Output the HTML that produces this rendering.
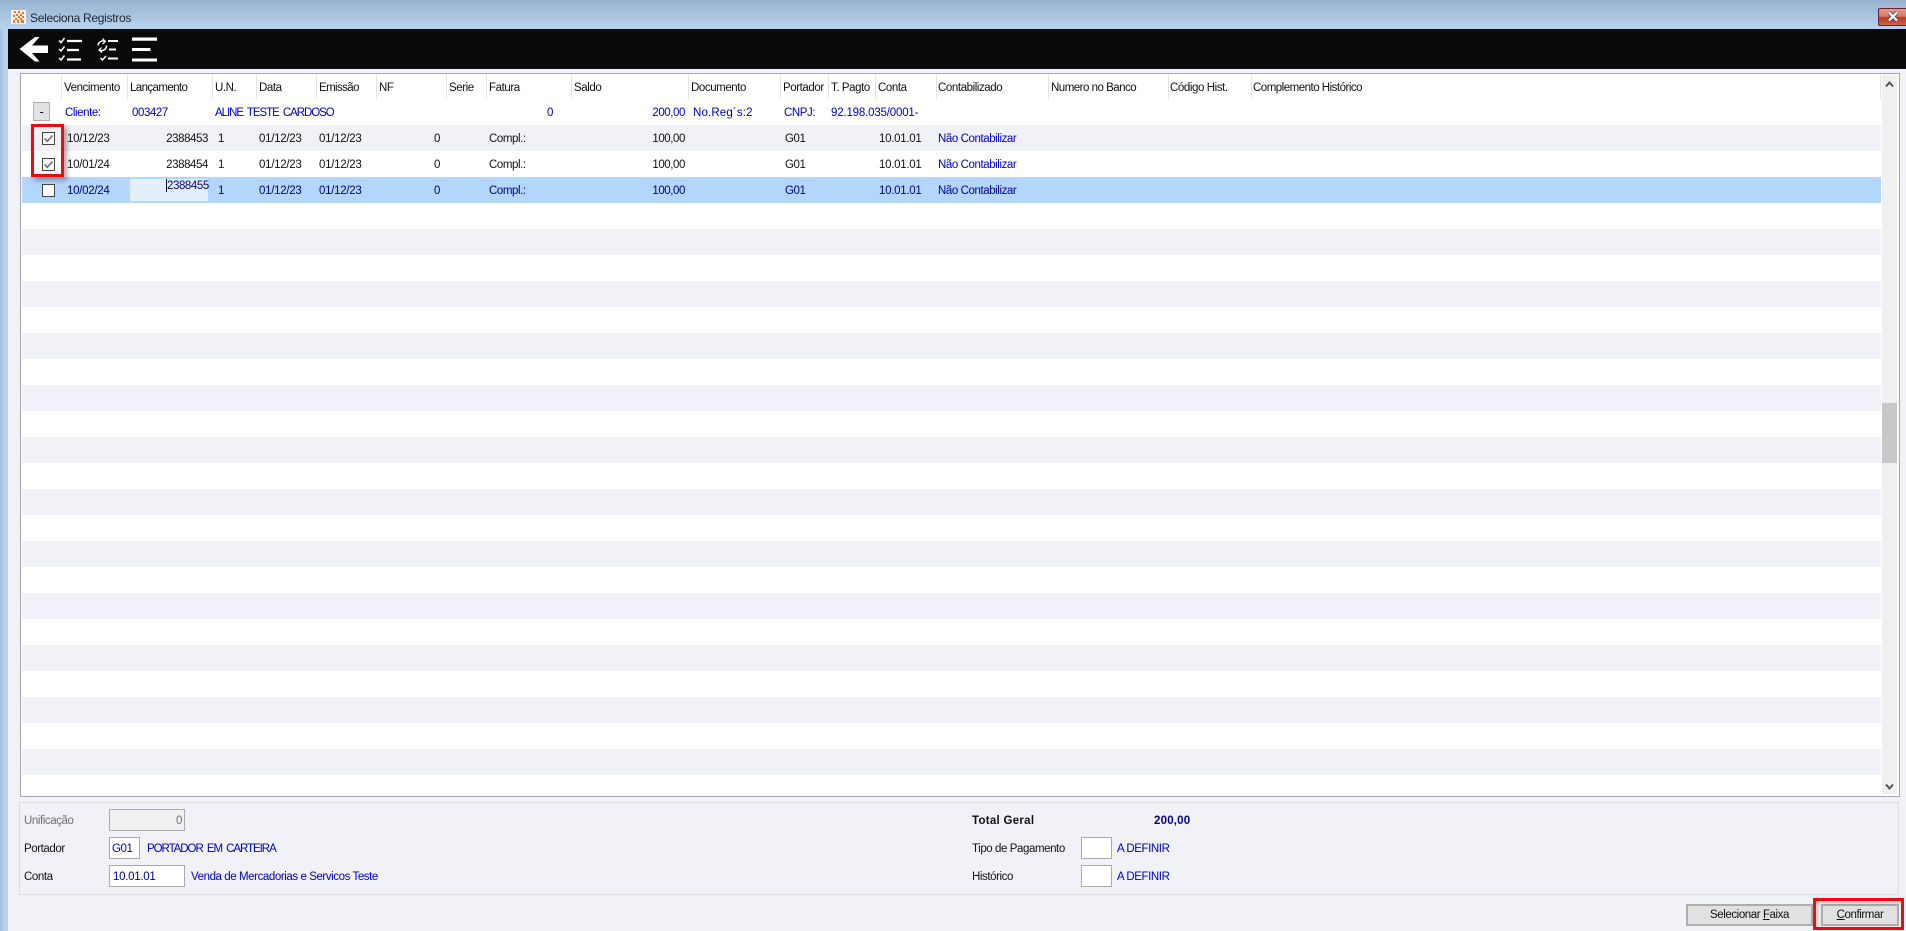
<!DOCTYPE html>
<html lang="pt"><head><meta charset="utf-8"><title>Seleciona Registros</title>
<style>
html,body{margin:0;padding:0;width:1906px;height:931px;overflow:hidden;background:#f0f2f8}
body{position:relative;font:11.5px/14px "Liberation Sans",sans-serif;letter-spacing:-.42px;color:#111}
div,span,i{position:absolute;display:block}
span{white-space:nowrap;font-style:normal}
.t{left:0;top:0;width:1906px;height:29px;background:linear-gradient(#97b2cf,#b9d3ee)}
.f{left:0;top:29px;width:8px;height:902px;background:linear-gradient(90deg,#a9c5e2 0,#a9c5e2 3px,#b9d2ec 3px)}
.k{left:8px;top:29px;width:1898px;height:40px;background:#0a0a0a}
.g{left:20px;top:73px;width:1878px;height:722px;background:#fff;border:1px solid #a6a6ac}
.rows{left:1px;top:51px;width:1859px;height:650px;background:repeating-linear-gradient(#f1f2f7 0,#f1f2f7 26px,#fff 26px,#fff 52px)}
.sel{left:22px;top:177px;width:1859px;height:26px;background:#b2d6fc}
.s{top:75px;width:1px;height:24px;background:#e3e3e3}
.h{top:81px}
.c{top:106px;color:#0000c4}
.a{top:132px}.b{top:158px}.d{top:184px;color:#000080}
.bl{color:#0000c4}
.r{text-align:right}
.dt{letter-spacing:-.28px}
.cap{letter-spacing:-1.05px;word-spacing:2px}
.cb{left:42px;width:11px;height:11px;border:1px solid #444;background:#f6f6f6}
.in{border:1px solid #aaa;background:#fff;box-sizing:border-box}
.btn{box-sizing:border-box;border:2px solid #adadad;background:#e1e1e1;height:22px;top:904px;text-align:center;line-height:18px;color:#111}
.btn u{text-decoration:underline}
.red{box-sizing:border-box;border:3px solid #ee0a10;box-shadow:3px 3px 5px rgba(0,0,0,.35)}
</style></head><body>
<div class="t"></div><div class="f"></div>
<svg style="position:absolute;left:11px;top:10px" width="15" height="14" viewBox="0 0 15 14"><rect width="15" height="14" fill="#fdf1e6"/><path d="M3 1h2v2H3zM7 1h2v2H7zM11 2h2v2h-2zM5 4h2v2H5zM9 4h2v2H9zM2 5h2v2H2zM7 6h2v2H7zM11 6h2v2h-2zM4 8h2v2H4zM9 8h2v2H9zM2 10h2v3H2zM6 10h2v3H6zM10 10h3v3h-3z" fill="#f0752a"/></svg>
<span style="left:30px;top:11px;color:#1c2430;font-size:12px;letter-spacing:-.3px">Seleciona Registros</span>
<div style="left:1878px;top:8px;width:28px;height:18px;box-sizing:border-box;border:1px solid #6a2230;border-right:0;border-radius:2px 0 0 2px;background:linear-gradient(#e39a8c 0,#d77b6c 45%,#b83a24 55%,#c9634d 100%)"></div>
<svg style="position:absolute;left:1887px;top:11px" width="12" height="11" viewBox="0 0 12 11"><path d="M2 1.500 10 9.500M10 1.500 2 9.500" stroke="#3c3c48" stroke-width="4"/><path d="M2 1.500 10 9.500M10 1.500 2 9.500" stroke="#f4f4f6" stroke-width="2.400"/></svg>
<div class="k"></div>
<svg style="position:absolute;left:0;top:29px" width="170" height="40" viewBox="0 29 170 40">
<path d="M19.500 49 35 37h4.500L32 45.500H48V53H32l7.500 8.500H35Z" fill="#fff"/>
<g fill="none" stroke="#fff"><path d="M59 40.500l2 2 3.500-4.500M59 49l2 2 3.500-4.500M59 58l2 2 3.500-4.500" stroke-width="1.500"/>
<path d="M67 41h15M67 50h12M67 59.500h14" stroke-width="2.200"/>
<path d="M98 45.500a4.800 4.800 0 0 1 7-4M106.500 45.500a4.800 4.800 0 0 1-7 4.500" stroke-width="1.500"/><path d="M102.500 38.500l3 3-3 2.500M101.500 47.500l-2.500 2.500 3 2.500" stroke-width="1.200"/><path d="M100.500 58l2 2 3.500-4" stroke-width="1.400"/>
<path d="M108 41h10M109 49.500h7M108 58.500h10" stroke-width="1.900"/></g>
<path d="M132 37.500h25v3.300h-25zM132 48h18.500v3h-18.500zM132 58.500h25v3h-25z" fill="#fff"/></svg>

<div class="g"><div class="rows"></div></div>
<div style="left:1882px;top:75px;width:15px;height:719px;background:#f0f0f0"></div>
<div style="left:1882px;top:403px;width:15px;height:60px;background:#c8c8c8"></div>
<svg style="position:absolute;left:1885px;top:80px" width="9" height="8" viewBox="0 0 9 8"><path d="M1 6.500 4.500 2.500 8 6.500" stroke="#555" stroke-width="2" fill="none"/></svg>
<svg style="position:absolute;left:1885px;top:783px" width="9" height="8" viewBox="0 0 9 8"><path d="M1 1.500 4.500 5.500 8 1.500" stroke="#555" stroke-width="2" fill="none"/></svg>
<div class="sel"></div>

<i class="s" style="left:61px"></i><i class="s" style="left:127px"></i><i class="s" style="left:212px"></i><i class="s" style="left:256px"></i><i class="s" style="left:316px"></i><i class="s" style="left:376px"></i><i class="s" style="left:446px"></i><i class="s" style="left:486px"></i><i class="s" style="left:571px"></i><i class="s" style="left:688px"></i><i class="s" style="left:780px"></i><i class="s" style="left:828px"></i><i class="s" style="left:875px"></i><i class="s" style="left:936px"></i><i class="s" style="left:1048px"></i><i class="s" style="left:1168px"></i><i class="s" style="left:1251px"></i><i class="s" style="left:1880px"></i>

<span class="h" style="left:64px">Vencimento</span><span class="h" style="left:130px;letter-spacing:-.6px">Lançamento</span><span class="h" style="left:215px">U.N.</span><span class="h" style="left:259px">Data</span><span class="h" style="left:319px;letter-spacing:-.6px">Emissão</span><span class="h" style="left:379px">NF</span><span class="h" style="left:449px">Serie</span><span class="h" style="left:489px">Fatura</span><span class="h" style="left:574px">Saldo</span><span class="h" style="left:691px">Documento</span><span class="h" style="left:783px">Portador</span><span class="h" style="left:831px">T. Pagto</span><span class="h" style="left:878px">Conta</span><span class="h" style="left:938px">Contabilizado</span><span class="h" style="left:1051px;letter-spacing:-.5px">Numero no Banco</span><span class="h" style="left:1170px">Código Hist.</span><span class="h" style="left:1253px;letter-spacing:-.5px">Complemento Histórico</span>

<div style="left:33px;top:102px;width:15px;height:17px;background:#e1e1e1;border:1px solid #b0b0b0;text-align:center;line-height:17px;font-size:13px">-</div>
<span class="c" style="left:65px">Cliente:</span><span class="c" style="left:132px">003427</span><span class="c cap" style="left:215px">ALINE TESTE CARDOSO</span><span class="c r" style="left:503px;width:50px">0</span><span class="c r" style="left:625px;width:60px">200,00</span><span class="c" style="left:693px;letter-spacing:.15px">No.Reg´s:2</span><span class="c" style="left:784px">CNPJ:</span><span class="c" style="left:831px;letter-spacing:-.18px">92.198.035/0001-</span>

<span class="cb" style="top:132px"></span><span class="cb" style="top:158px"></span><span class="cb" style="top:184px;background:#fff"></span>
<svg style="position:absolute;left:42px;top:132px" width="13" height="13" viewBox="0 0 13 13"><path d="M2.500 6.500 5.300 9.300 10.500 3.500" stroke="#666" stroke-width="1.400" fill="none"/></svg>
<svg style="position:absolute;left:42px;top:158px" width="13" height="13" viewBox="0 0 13 13"><path d="M2.500 6.500 5.300 9.300 10.500 3.500" stroke="#666" stroke-width="1.400" fill="none"/></svg>

<span class="a dt" style="left:67px">10/12/23</span><span class="a r" style="left:148px;width:60px">2388453</span><span class="a" style="left:218px">1</span><span class="a dt" style="left:259px">01/12/23</span><span class="a dt" style="left:319px">01/12/23</span><span class="a r" style="left:400px;width:40px">0</span><span class="a" style="left:489px">Compl.:</span><span class="a r" style="left:625px;width:60px">100,00</span><span class="a" style="left:785px">G01</span><span class="a dt" style="left:879px">10.01.01</span><span class="a bl" style="left:938px">Não Contabilizar</span>

<span class="b dt" style="left:67px">10/01/24</span><span class="b r" style="left:148px;width:60px">2388454</span><span class="b" style="left:218px">1</span><span class="b dt" style="left:259px">01/12/23</span><span class="b dt" style="left:319px">01/12/23</span><span class="b r" style="left:400px;width:40px">0</span><span class="b" style="left:489px">Compl.:</span><span class="b r" style="left:625px;width:60px">100,00</span><span class="b" style="left:785px">G01</span><span class="b dt" style="left:879px">10.01.01</span><span class="b bl" style="left:938px">Não Contabilizar</span>

<div style="left:130px;top:179px;width:78px;height:22px;background:#e3effd"></div>
<div style="left:166px;top:179px;width:1px;height:13px;background:#111"></div>
<span class="d dt" style="left:67px">10/02/24</span><span class="d" style="left:167px;top:179px">2388455</span><span class="d" style="left:218px">1</span><span class="d dt" style="left:259px">01/12/23</span><span class="d dt" style="left:319px">01/12/23</span><span class="d r" style="left:400px;width:40px">0</span><span class="d" style="left:489px">Compl.:</span><span class="d r" style="left:625px;width:60px">100,00</span><span class="d" style="left:785px">G01</span><span class="d dt" style="left:879px">10.01.01</span><span class="d" style="left:938px;color:#000090">Não Contabilizar</span>

<div class="red" style="left:31px;top:124px;width:33px;height:53px"></div>

<div style="left:19px;top:802px;width:1880px;height:93px;box-sizing:border-box;border:1px solid #dcdcdc"></div>
<span style="left:24px;top:814px;color:#6f6f6f">Unificação</span>
<div class="in" style="left:109px;top:809px;width:76px;height:22px;background:#f0f0f0"></div><span class="r" style="left:150px;width:32px;top:814px;color:#6f6f6f">0</span>
<span style="left:24px;top:842px">Portador</span>
<div class="in" style="left:109px;top:837px;width:31px;height:22px"></div><span class="bl" style="left:112px;top:842px">G01</span><span class="bl cap" style="left:147px;top:842px">PORTADOR EM CARTEIRA</span>
<span style="left:24px;top:870px">Conta</span>
<div class="in" style="left:109px;top:865px;width:76px;height:22px"></div><span class="dt" style="left:113px;top:870px;color:#000090">10.01.01</span><span class="bl" style="left:191px;top:870px">Venda de Mercadorias e Servicos Teste</span>

<span style="left:972px;top:814px;font-weight:bold;letter-spacing:.28px">Total Geral</span><span style="left:1154px;top:814px;font-weight:bold;color:#000090;letter-spacing:.2px">200,00</span>
<span style="left:972px;top:842px">Tipo de Pagamento</span><div class="in" style="left:1081px;top:837px;width:31px;height:22px"></div><span class="bl" style="left:1117px;top:842px">A DEFINIR</span>
<span style="left:972px;top:870px">Histórico</span><div class="in" style="left:1081px;top:865px;width:31px;height:22px"></div><span class="bl" style="left:1117px;top:870px">A DEFINIR</span>

<div class="btn" style="left:1686px;width:127px">Selecionar <u>F</u>aixa</div>
<div class="btn" style="left:1821px;width:78px"><u>C</u>onfirmar</div>
<div class="red" style="left:1813px;top:898px;width:91px;height:32px;box-shadow:inset 2px 2px 4px rgba(0,0,0,.2)"></div>
</body></html>
